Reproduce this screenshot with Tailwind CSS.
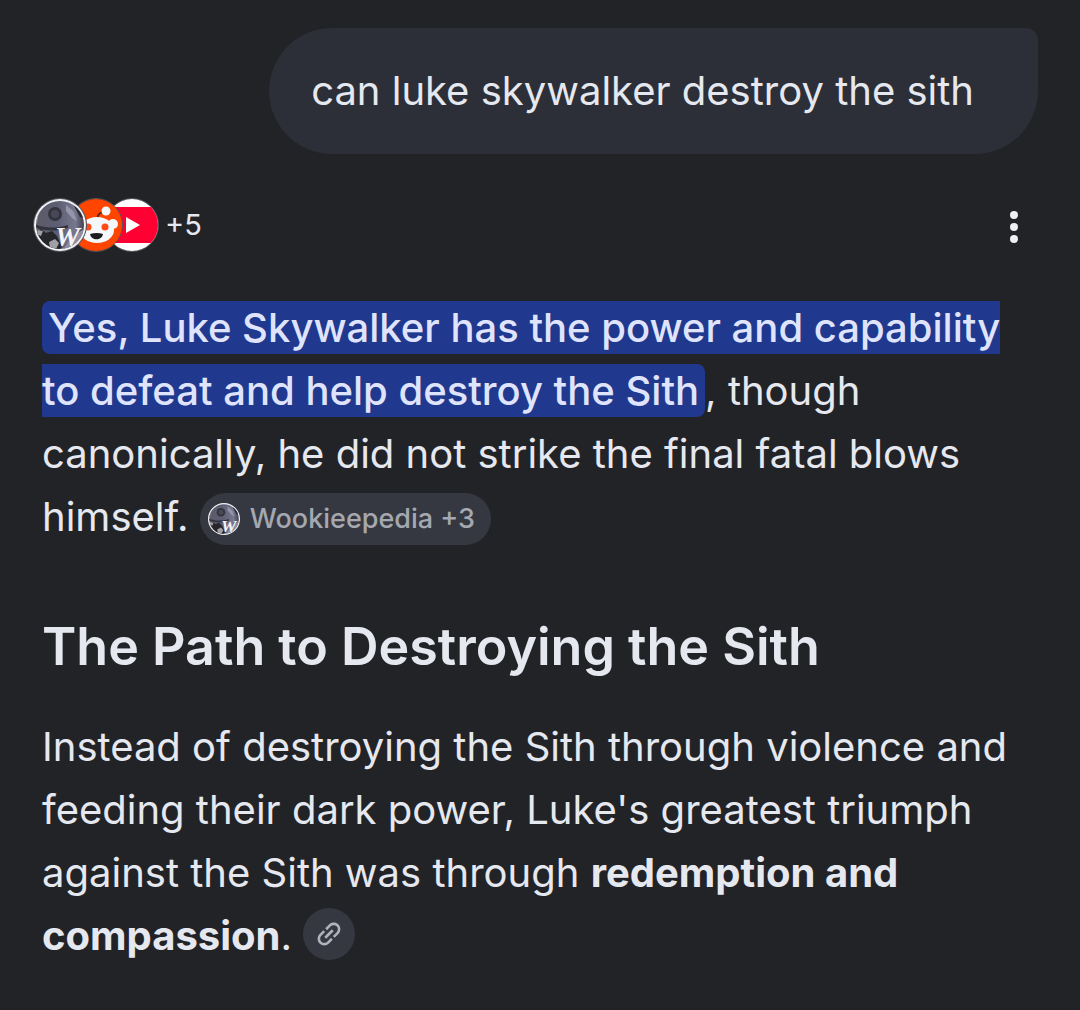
<!DOCTYPE html>
<html lang="en">
<head>
  <meta charset="UTF-8">
  <meta name="viewport" content="width=device-width, initial-scale=1">
  <title>can luke skywalker destroy the sith</title>
  <script src="https://cdn.jsdelivr.net/npm/@tailwindcss/browser@4"></script>
</head>
<body class="min-h-screen bg-[#222327] text-[#e6e8f0] font-['Inter',sans-serif]">

  <!-- Shared favicon, used in the source stack and in the citation chip -->
  <svg class="absolute size-0" aria-hidden="true">
    <defs>
      <linearGradient id="moon" x1="0" y1="0" x2="1" y2="0">
        <stop offset="0" stop-color="#5b5b66"/>
        <stop offset="0.45" stop-color="#5d5d74"/>
        <stop offset="0.8" stop-color="#77778e"/>
        <stop offset="1" stop-color="#34343f"/>
      </linearGradient>
      <clipPath id="round"><circle cx="26" cy="26" r="24"/></clipPath>
      <symbol id="wookieepedia" viewBox="0 0 52 52">
        <circle cx="26" cy="26" r="26" fill="#f2f3f7"/>
        <g clip-path="url(#round)">
          <rect width="52" height="52" fill="url(#moon)"/>
          <path d="M0 0h13L5 12l-2 12H0z" fill="#9b9ba4"/>
          <path d="M38 0h14v20l-6-2-5-9z" fill="#2a2a33"/>
          <path d="M32 6l7 6 4 10-5-3-6-7z" fill="#9696ab"/>
          <circle cx="21" cy="15" r="7" fill="#34343f"/>
          <circle cx="21" cy="15" r="4" fill="#484858"/>
          <path d="M0 25c10 4 20 5 34 1v3c-13 4-24 3-34-1z" fill="#33333e"/>
          <path d="M2 33l5-3 5 4 6-2 5 5 5 11-6 6H4z" fill="#26252a"/>
          <path d="M4 31l5 1-2 5-5-2zM15 43l6-3 4 4-3 6-6-1z" fill="#a09fa5"/>
          <path d="M38 38l12-8v14l-9 8H28z" fill="#8f8fa0"/>
        </g>
        <text x="21" y="47" font-family="Liberation Serif, serif" font-size="28" font-weight="bold" font-style="italic" fill="#f4f4f8">W</text>
      </symbol>
    </defs>
  </svg>

  <main class="pt-7 px-[42px]">
    <div class="flex justify-end">
      <h1 class="rounded-[63px] rounded-tr-xl bg-[#2c2f37] py-8 pl-[42px] pr-16 text-[40px] leading-[62px]">can luke skywalker destroy the sith</h1>
    </div>

    <div class="mt-11 -ml-[9px] flex items-center justify-between">
      <button class="flex items-center" aria-label="Show all sources">
        <span class="relative z-20 size-[54px] rounded-full border border-[#55565c] bg-[#222327]">
          <svg class="size-full"><use href="#wookieepedia"/></svg>
        </span>
        <span class="relative z-10 -ml-[18px] size-[54px] rounded-full border border-[#55565c]">
          <svg class="size-full" viewBox="0 0 52 52">
            <circle cx="26" cy="26" r="26" fill="#ff4500"/>
            <path d="M27 20c1-6 4-7 8-7" fill="none" stroke="#5b2418" stroke-width="2"/>
            <circle cx="36" cy="12" r="4.500" fill="#f5f8fa"/>
            <circle cx="10" cy="25" r="5" fill="#f5f8fa"/>
            <circle cx="43" cy="25" r="5" fill="#f5f8fa"/>
            <ellipse cx="27" cy="31" rx="17" ry="13" fill="#f5f8fa"/>
            <circle cx="18" cy="28" r="3.500" fill="#ff4a16"/>
            <circle cx="35" cy="28" r="3.500" fill="#ff4a16"/>
            <path d="M20 35q7-2 13 0c-1 7-12 7-13 0z" fill="#1c1c1e"/>
          </svg>
        </span>
        <span class="-ml-[18px] size-[54px] overflow-hidden rounded-full border border-[#55565c]">
          <svg class="size-full" viewBox="0 0 52 52">
            <rect width="52" height="52" fill="#fff"/>
            <rect x="-2" y="8" width="54" height="36" rx="3" fill="#ff0033"/>
            <path d="M20 18l14 8-14 8z" fill="#fff"/>
          </svg>
        </span>
        <span class="ml-[6px] text-[29px]">+5</span>
      </button>
      <button class="flex w-12 justify-center pt-1" aria-label="More options">
        <svg class="h-8 w-2" viewBox="0 0 8 32" fill="#eeeff3">
          <circle cx="4" cy="4" r="4"/>
          <circle cx="4" cy="16" r="4"/>
          <circle cx="4" cy="28" r="4"/>
        </svg>
      </button>
    </div>

    <p class="mt-11 text-[40px] leading-[63px] whitespace-nowrap">
      <mark class="rounded-lg bg-[#21388f] px-[6px] py-[2px] font-medium text-[#dfe4fc]">Yes, Luke Skywalker has the power and capability<br>
      to defeat and help destroy the Sith</mark>, though<br>
      canonically, he did not strike the final fatal blows<br>
      himself.
      <button class="mt-2 inline-flex h-[52px] items-center gap-[10px] rounded-full bg-[#353840] pl-2 pr-4 align-top text-[27px] leading-8 font-medium text-[#a5a8b1]">
        <svg class="size-8"><use href="#wookieepedia"/></svg>
        Wookieepedia +3
      </button>
    </p>

    <h2 class="mt-[63px] text-[52px] leading-[72px] font-semibold">The Path to Destroying the Sith</h2>

    <p class="mt-8 text-[40px] leading-[63px] whitespace-nowrap">
      Instead of destroying the Sith through violence and<br>
      feeding their dark power, Luke's greatest triumph<br>
      against the Sith was through <strong class="font-bold">redemption and<br>
      compassion</strong>.
      <button class="mt-1 inline-flex size-[52px] items-center justify-center rounded-full bg-[#353840] align-top" aria-label="View related links">
        <svg class="size-8 -rotate-45" viewBox="0 0 24 24" fill="#b0b3bb">
          <path d="M3.900 12c0-1.710 1.390-3.100 3.100-3.100h4V7H7c-2.760 0-5 2.240-5 5s2.240 5 5 5h4v-1.900H7c-1.710 0-3.100-1.390-3.100-3.100zM8 13h8v-2H8v2zm9-6h-4v1.900h4c1.710 0 3.100 1.390 3.100 3.100s-1.390 3.100-3.100 3.100h-4V17h4c2.760 0 5-2.240 5-5s-2.240-5-5-5z"/>
        </svg>
      </button>
    </p>
  </main>
</body>
</html>
